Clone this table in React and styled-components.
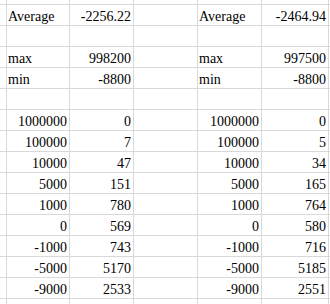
import React from "react";
import styled, { createGlobalStyle } from "styled-components";

const Global = createGlobalStyle`
  html, body { margin: 0; padding: 0; background: #ffffff; }
  body { font-family: "Liberation Serif", "Times New Roman", serif; }
`;

const Sheet = styled.div`
  display: grid;
  grid-template-columns: 6px 62px 63px 63px 63px 66px 1px;
  grid-template-rows: 4px repeat(14, 20px) 5px;
  gap: 1px;
  background: #d9d9d9;
  width: 330px;
  height: 304px;
  overflow: hidden;
`;

const Cell = styled.div`
  background: #ffffff;
  display: flex;
  align-items: flex-end;
  justify-content: ${(p) => (p.$align === "right" ? "flex-end" : "flex-start")};
  padding: 0 ${(p) => (p.$align === "right" ? "2px" : "0")} 0 ${(p) => (p.$align === "right" ? "0" : "1px")};
  font-family: "Liberation Serif", "Times New Roman", serif;
  font-size: 14px;
  line-height: 16px;
  color: #000000;
  white-space: nowrap;
  overflow: hidden;
  box-sizing: border-box;
`;

const L = (t) => ({ t, a: "left" });
const R = (t) => ({ t, a: "right" });
const E = { t: "", a: "left" };

const pairs = [
  ["1000000", "0", "1000000", "0"],
  ["100000", "7", "100000", "5"],
  ["10000", "47", "10000", "34"],
  ["5000", "151", "5000", "165"],
  ["1000", "780", "1000", "764"],
  ["0", "569", "0", "580"],
  ["-1000", "743", "-1000", "716"],
  ["-5000", "5170", "-5000", "5185"],
  ["-9000", "2533", "-9000", "2551"],
];

const body = [
  [L("Average"), R("-2256.22"), E, L("Average"), R("-2464.94")],
  [E, E, E, E, E],
  [L("max"), R("998200"), E, L("max"), R("997500")],
  [L("min"), R("-8800"), E, L("min"), R("-8800")],
  [E, E, E, E, E],
  ...pairs.map(([a, b, c, d]) => [R(a), R(b), E, R(c), R(d)]),
];

const blankRow = [E, E, E, E, E];
const rows = [blankRow, ...body, blankRow];

export default function App() {
  return (
    <>
      <Global />
      <Sheet>
        {rows.map((row, ri) =>
          [E, ...row, E].map((c, ci) => (
            <Cell key={`${ri}-${ci}`} $align={c.a}>
              {c.t}
            </Cell>
          ))
        )}
      </Sheet>
    </>
  );
}
